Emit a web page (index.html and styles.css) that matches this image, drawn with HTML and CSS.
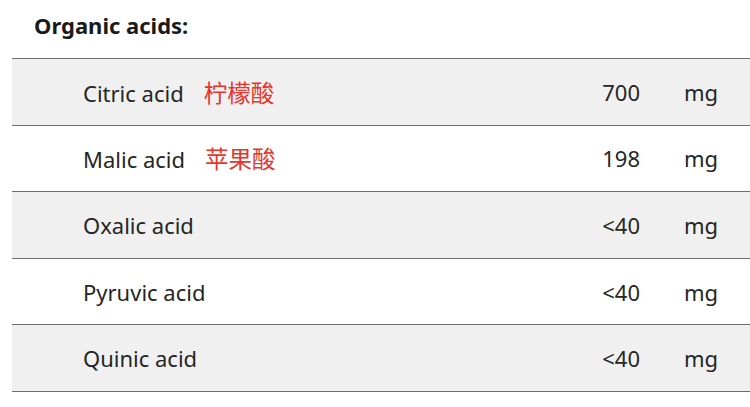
FILE: index.html
```html
<!DOCTYPE html>
<html>
<head>
<meta charset="utf-8">
<link rel="stylesheet" href="styles.css">
</head>
<body>
<div class="page">
  <h2 class="title">Organic acids:</h2>
  <div class="table">
    <div class="row shade">
      <div class="name">Citric acid<span class="zh">柠檬酸</span></div>
      <div class="value">700</div>
      <div class="unit">mg</div>
    </div>
    <div class="row">
      <div class="name">Malic acid<span class="zh">苹果酸</span></div>
      <div class="value">198</div>
      <div class="unit">mg</div>
    </div>
    <div class="row shade">
      <div class="name">Oxalic acid</div>
      <div class="value">&lt;40</div>
      <div class="unit">mg</div>
    </div>
    <div class="row">
      <div class="name">Pyruvic acid</div>
      <div class="value">&lt;40</div>
      <div class="unit">mg</div>
    </div>
    <div class="row shade last">
      <div class="name">Quinic acid</div>
      <div class="value">&lt;40</div>
      <div class="unit">mg</div>
    </div>
  </div>
</div>
</body>
</html>
```
FILE: styles.css
```css
html, body {
  margin: 0;
  padding: 0;
  background: #ffffff;
}
body {
  font-family: "Noto Sans", "Noto Sans CJK SC", sans-serif;
  color: #262626;
  overflow: hidden;
}
.page {
  padding-left: 12px;
}
.title {
  margin: 0;
  padding: 10px 0 0 22px;
  height: 58px;
  box-sizing: border-box;
  font-size: 22px;
  font-weight: 700;
  line-height: 30px;
  color: #1a1a1a;
}
.table {
  width: 760px;
}
.row {
  display: grid;
  grid-template-columns: 557px 71px 80px;
  align-items: center;
  box-sizing: border-box;
  height: 66.6px;
  border-top: 1.5px solid #6e6e6e;
  font-size: 22px;
}
.row.last {
  height: 68.1px;
  border-bottom: 1.5px solid #6e6e6e;
}
.shade {
  background: #f0f0f0;
}
.name {
  padding-left: 71px;
}
.zh {
  margin-left: 20px;
  font-size: 23.5px;
  color: #e8342b;
  font-family: "Noto Sans CJK SC", sans-serif;
}
.value {
  text-align: right;
}
.unit {
  padding-left: 44px;
}
```
